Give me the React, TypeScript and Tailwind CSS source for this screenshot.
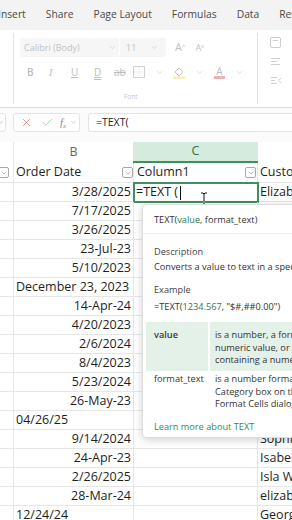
import { X, Check, ChevronDown } from 'lucide-react'

const rows: [string, 'l' | 'r', string][] = [
  ['3/28/2025', 'r', 'Elizabeth'],
  ['7/17/2025', 'r', ''],
  ['3/26/2025', 'r', ''],
  ['23-Jul-23', 'r', ''],
  ['5/10/2023', 'r', ''],
  ['December 23, 2023', 'l', ''],
  ['14-Apr-24', 'r', ''],
  ['4/20/2023', 'r', ''],
  ['2/6/2024', 'r', ''],
  ['8/4/2023', 'r', ''],
  ['5/23/2024', 'r', ''],
  ['26-May-23', 'r', ''],
  ['04/26/25', 'l', ''],
  ['9/14/2024', 'r', 'Sophia'],
  ['24-Apr-23', 'r', 'Isabella'],
  ['2/26/2025', 'r', 'Isla Wilson'],
  ['28-Mar-24', 'r', 'elizabeth'],
  ['12/24/24', 'l', 'George'],
]

function Caret({ className = '' }: { className?: string }) {
  return <ChevronDown size={9} strokeWidth={1.5} className={`text-[#c4c4c4] ${className}`} />
}

function FilterBox() {
  return (
    <span className="flex h-[11px] w-[11px] shrink-0 items-center justify-center rounded-[2px] border border-[#a8a8a8] bg-white">
      <ChevronDown size={8} strokeWidth={1.5} className="text-[#777]" />
    </span>
  )
}

function Ribbon() {
  return (
    <div className="flex h-[78px] border-b border-[#dcdcdc] bg-white">
      <div className="w-[14px] shrink-0 border-r border-[#e2e2e2] my-[3px]" />
      <div className="flex w-[243px] shrink-0 flex-col pl-[6px] pt-[8px]">
        {/* font name and size */}
        <div className="flex h-[19px] items-center">
          <div className="flex h-[19px] w-[146px] items-center rounded-[3px] bg-[#f6f6f6] text-[9px] text-[#c2c2c2]">
            <span className="ml-[4px] w-[84px]">Calibri (Body)</span>
            <Caret />
            <span className="mx-[2px] h-[19px] w-px bg-white" />
            <span className="ml-[4px] w-[24px]">11</span>
            <Caret />
          </div>
          <span className="ml-[9px] text-[11px] text-[#c2c2c2]">A<sup className="text-[6px]">^</sup></span>
          <span className="ml-[10px] text-[9px] text-[#c2c2c2]">A<sup className="text-[6px]">v</sup></span>
        </div>
        {/* formatting buttons */}
        <div className="mt-[5px] flex h-[20px] items-center text-[10px] text-[#bdbdbd]">
          <span className="ml-[7px] w-[22px] font-semibold">B</span>
          <span className="w-[22px] font-['Liberation_Serif',serif] italic">I</span>
          <span className="w-[23px] underline">U</span>
          <span className="w-[20px] underline decoration-double">D</span>
          <span className="w-[18px] line-through">ab</span>
          <svg width="12" height="12" viewBox="0 0 12 12" className="ml-[1px]">
            <rect x="0.5" y="0.5" width="11" height="11" fill="none" stroke="#cfcfcf" />
            <path d="M6 1v10M1 6h10" stroke="#dedede" strokeDasharray="1 1" />
          </svg>
          <Caret className="ml-[10px]" />
          <svg width="12" height="13" viewBox="0 0 12 13" className="ml-[9px]">
            <path d="M2 6l4-4 4 4-4 4z" fill="none" stroke="#c6c6c6" />
            <rect x="0" y="10.5" width="12" height="2.5" fill="#f6edb8" />
          </svg>
          <Caret className="ml-[10px]" />
          <span className="ml-[10px] flex flex-col items-center leading-[10px]">
            <span className="text-[10px]">A</span>
            <span className="h-[3px] w-[11px] bg-[#eab0b5]" />
          </span>
          <Caret className="ml-[10px]" />
        </div>
        <div className="mt-[10px] pl-[104px] text-[6.5px] text-[#c8c8c8]">Font</div>
      </div>
      <div className="my-[3px] w-px shrink-0 bg-[#e2e2e2]" />
      <div className="flex flex-col gap-[8px] pl-[12px] pt-[7px]">
        <svg width="11" height="11" viewBox="0 0 11 11">
          <rect x="0.5" y="0.5" width="10" height="10" rx="1.5" fill="none" stroke="#cdcdcd" />
          <path d="M3 3.5h5" stroke="#cdcdcd" />
        </svg>
        <svg width="11" height="11" viewBox="0 0 11 11">
          <path d="M1 2.5h9M1 5.5h6M1 8.5h9" stroke="#d0d0d0" />
        </svg>
        <svg width="12" height="11" viewBox="0 0 12 11">
          <path d="M1 2.5h6M1 5.5h4M1 8.5h6M11 3l-2.5 2.5L11 8" stroke="#d0d0d0" fill="none" />
        </svg>
      </div>
    </div>
  )
}

function FormulaBar() {
  return (
    <div className="flex h-[34px] items-start bg-[#fbfbfb] pt-[5px]">
      <div className="-ml-[6px] flex h-[19px] w-[12px] items-center justify-end rounded-[3px] border border-[#e4e4e4] bg-white pr-[1px]">
        <ChevronDown size={7} className="text-[#999]" />
      </div>
      <div className="ml-[7px] flex h-[19px] w-[67px] items-center rounded-[3px] border border-[#e4e4e4] bg-white">
        <X size={13} strokeWidth={1.4} className="ml-[6px] text-[#e27a7a]" />
        <Check size={13} strokeWidth={1.4} className="ml-[8px] text-[#8cc8a2]" />
        <span className="ml-[6px] font-['Liberation_Serif',serif] text-[11px] italic text-[#888]">
          f<sub className="text-[7px]">x</sub>
        </span>
        <ChevronDown size={7} className="ml-[4px] text-[#aaa]" />
      </div>
      <div className="ml-[8px] flex h-[19px] flex-1 items-center rounded-l-[3px] border border-r-0 border-[#e4e4e4] bg-white pl-[7px] text-[10.5px] text-[#222]">
        =TEXT(
      </div>
    </div>
  )
}

function Popup() {
  return (
    <div className="absolute left-[142px] top-[204px] h-[234px] w-[170px] overflow-hidden rounded-[4px] border border-[#dedede] bg-white font-['Open_Sans',sans-serif] text-[9.2px] text-[#333] shadow-[0_2px_8px_rgba(0,0,0,0.18)]">
      <div className="h-[29px] border-b border-[#ececec] pl-[11px] pt-[8px] leading-[13px]">
        TEXT(<span className="text-[#2a7a4c]">value</span>, format_text)
      </div>
      <div className="pl-[11px] pt-[11px] leading-[14px]">
        <div className="text-[#444]">Description</div>
        <div className="mt-[1px] whitespace-nowrap">Converts a value to text in a specific number format</div>
        <div className="mt-[9px] text-[#444]">Example</div>
        <div className="mt-[3px] whitespace-nowrap">
          =TEXT(<span className="text-[#2a7a4c]">1234.567</span>, "$#,##0.00")
        </div>
      </div>
      <div className="ml-[3px] mt-[8px] flex flex-col leading-[12.5px]">
        <div className="flex h-[49px] bg-[#e3f1e8]">
          <div className="w-[64px] shrink-0 border-r-2 border-white pl-[8px] pt-[7px] font-semibold text-[#3a3a3a]">value</div>
          <div className="whitespace-nowrap pl-[5px] pt-[7px]">
            <div>is a number, a formula that</div>
            <div>numeric value, or a reference</div>
            <div>containing a numeric value</div>
          </div>
        </div>
        <div className="flex h-[42px]">
          <div className="w-[64px] shrink-0 pl-[8px] pt-[2px]">format_text</div>
          <div className="whitespace-nowrap pl-[5px] pt-[2px]">
            <div>is a number format in the</div>
            <div>Category box on the Number tab</div>
            <div>Format Cells dialog box</div>
          </div>
        </div>
      </div>
      <div className="pl-[11px] pt-[7px] text-[9.2px] font-medium text-[#2f8a5a]">Learn more about TEXT</div>
    </div>
  )
}

export default function App() {
  return (
    <div className="relative h-[520px] w-[292px] overflow-hidden bg-white font-['Open_Sans',sans-serif]">
      {/* tabs */}
      <div className="flex h-[30px] items-center gap-[20px] whitespace-nowrap bg-[#f3f3f3] pb-[1px] text-[10.3px] text-[#4a4a4a]">
        <span className="-ml-[2px]">Insert</span>
        <span>Share</span>
        <span>Page Layout</span>
        <span>Formulas</span>
        <span>Data</span>
        <span>Review</span>
      </div>

      <Ribbon />
      <FormulaBar />

      {/* column letters */}
      <div className="flex h-[21px] text-[12.5px]">
        <div className="w-[14px] shrink-0 border-r border-[#e6e6e6]" />
        <div className="flex w-[119px] shrink-0 items-center justify-center text-[#666]">B</div>
        <div className="flex w-[125px] shrink-0 items-center justify-center border-b-2 border-[#3f8f5f] bg-[#d5ebdd] text-[#2f6f47]">C</div>
        <div className="flex-1" />
      </div>

      {/* table header */}
      <div className="flex h-[20px] items-center border-b border-[#e6e6e6] text-[12.5px] text-[#1e1e1e]">
        <div className="flex h-full w-[14px] shrink-0 items-center border-r border-[#e6e6e6]">
          <span className="-ml-[2px]"><FilterBox /></span>
        </div>
        <div className="flex h-full w-[120px] shrink-0 items-center border-r border-[#e6e6e6]">
          <span className="pl-[2px]">Order Date</span>
          <span className="ml-auto"><FilterBox /></span>
        </div>
        <div className="flex h-full w-[124px] shrink-0 items-center border-r border-[#e6e6e6]">
          <span className="pl-[3px]">Column1</span>
          <span className="ml-auto mr-[1px]"><FilterBox /></span>
        </div>
        <div className="whitespace-nowrap pl-[2px]">Customer Name</div>
      </div>

      {/* rows */}
      {rows.map(([date, align, name], i) => (
        <div key={i} className="relative flex h-[19px] items-center border-b border-[#e6e6e6] text-[12.5px] text-[#1e1e1e]">
          <div className="h-full w-[14px] shrink-0 border-r border-[#e6e6e6]" />
          <div className={`flex h-full w-[120px] shrink-0 items-center border-r border-[#e6e6e6] px-[2px] whitespace-nowrap ${align === 'r' ? 'justify-end' : 'justify-start'}`}>
            {date}
          </div>
          <div className="h-full w-[124px] shrink-0 border-r border-[#e6e6e6]" />
          <div className="whitespace-nowrap pl-[2px]">{name}</div>
          {i === 0 && (
            <div className="absolute left-[133px] top-[-1px] flex h-[21px] w-[126px] items-center border-2 border-[#3f8f5f] pl-[1px]">
              <span>=TEXT (</span>
              <span className="ml-[2px] h-[14px] w-px bg-[#111]" />
              <svg width="8" height="16" viewBox="0 0 8 16" className="absolute left-[65px] top-[8px]">
                <path d="M1 1h2l1 1 1-1h2M4 2v12M1 15h2l1-1 1 1h2" stroke="#fff" strokeWidth="2.2" fill="none" />
                <path d="M1 1h2l1 1 1-1h2M4 2v12M1 15h2l1-1 1 1h2" stroke="#111" strokeWidth="1" fill="none" />
              </svg>
            </div>
          )}
        </div>
      ))}

      <Popup />
    </div>
  )
}
